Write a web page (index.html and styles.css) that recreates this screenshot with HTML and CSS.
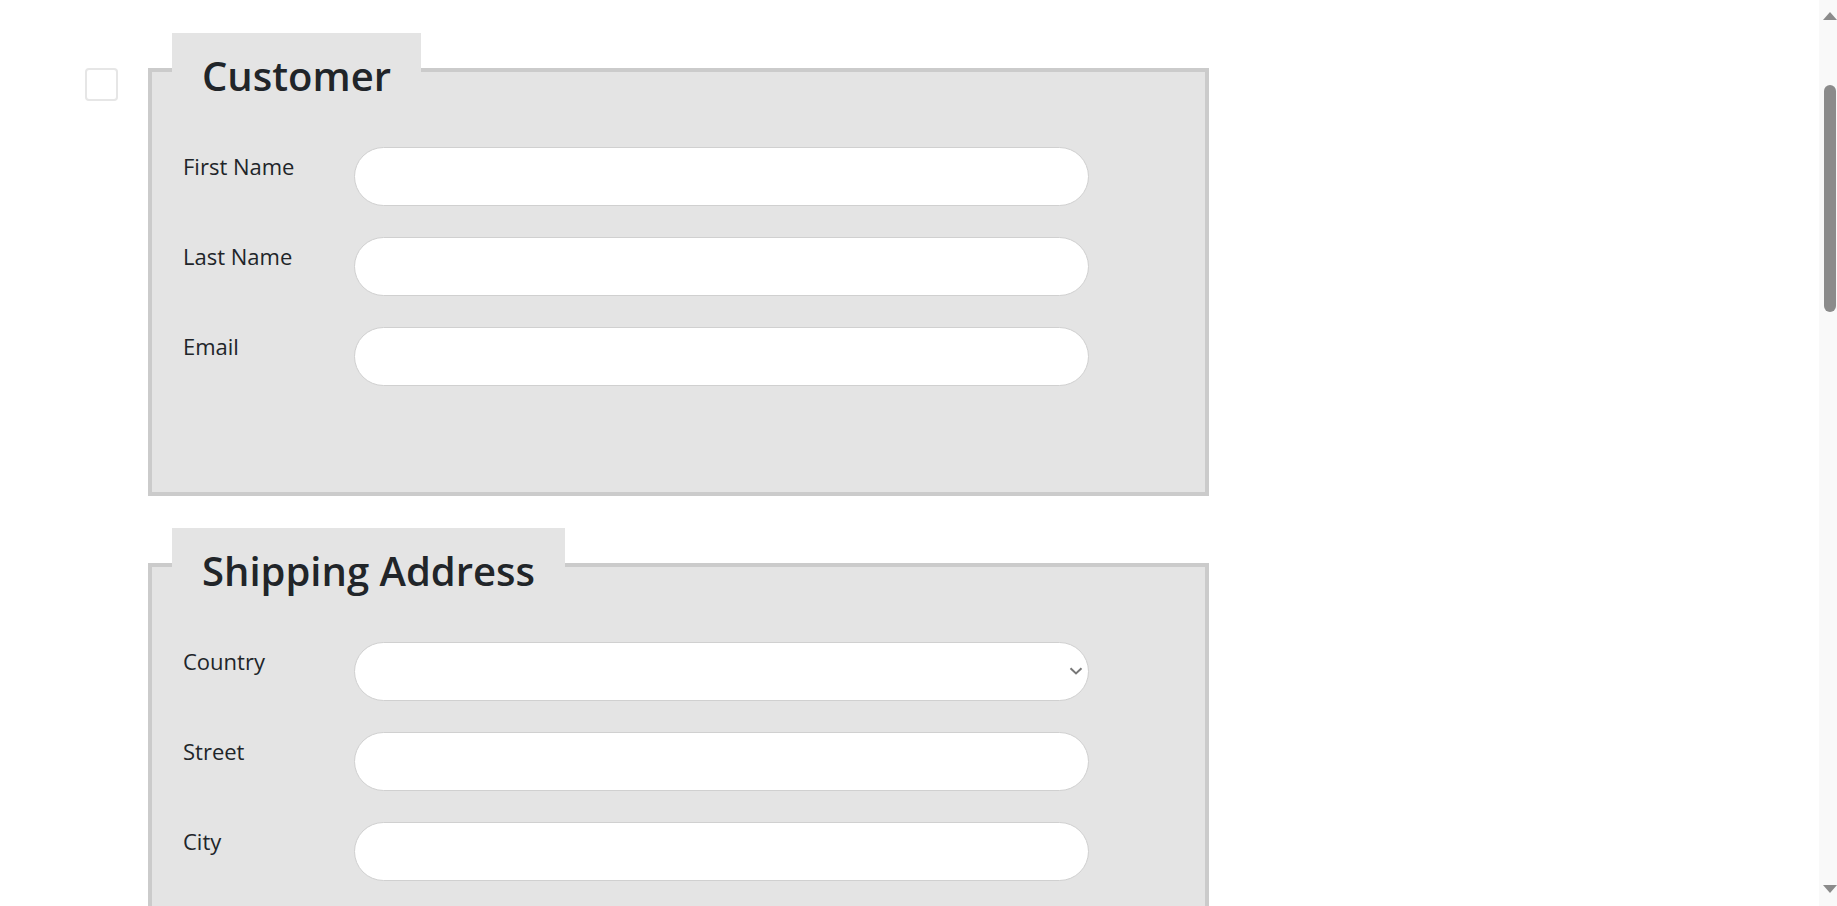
FILE: index.html
```html
<!DOCTYPE html>
<html lang="en">
<head>
<meta charset="utf-8">
<title>Order Form</title>
<link rel="stylesheet" href="styles.css">
</head>
<body>
<form class="order-form">
  <input class="section-toggle" type="checkbox" aria-label="Toggle section">
  <fieldset class="section">
    <legend class="section-title">Customer</legend>
    <div class="field-grid">
      <label class="field-label" for="first-name">First Name</label>
      <input class="field-input" id="first-name" type="text">
      <label class="field-label" for="last-name">Last Name</label>
      <input class="field-input" id="last-name" type="text">
      <label class="field-label" for="email">Email</label>
      <input class="field-input" id="email" type="email">
    </div>
  </fieldset>

  <div class="gutter"></div>
  <fieldset class="section">
    <legend class="section-title">Shipping Address</legend>
    <div class="field-grid">
      <label class="field-label" for="country">Country</label>
      <div class="select-wrap">
        <select class="field-input field-select" id="country">
          <option></option>
        </select>
        <svg class="select-chevron" width="14" height="8" viewBox="0 0 14 8" aria-hidden="true"><path d="M1.5 1.2 L7 6.4 L12.5 1.2" fill="none" stroke="#777" stroke-width="2"/></svg>
      </div>
      <label class="field-label" for="street">Street</label>
      <input class="field-input" id="street" type="text">
      <label class="field-label" for="city">City</label>
      <input class="field-input" id="city" type="text">
      <label class="field-label" for="state">State</label>
      <input class="field-input" id="state" type="text">
      <label class="field-label" for="zip">Postal Code</label>
      <input class="field-input" id="zip" type="text">
    </div>
  </fieldset>
</form>

<div class="scrollbar" aria-hidden="true">
  <svg class="scroll-arrow scroll-arrow-up" width="14" height="8" viewBox="0 0 14 8"><path d="M7 0 L14 8 L0 8 Z" fill="#8b8b8b"/></svg>
  <div class="scroll-track"><div class="scroll-thumb"></div></div>
  <svg class="scroll-arrow scroll-arrow-down" width="14" height="8" viewBox="0 0 14 8"><path d="M0 0 L14 0 L7 8 Z" fill="#8b8b8b"/></svg>
</div>
</body>
</html>
```

FILE: styles.css
```css
html {
  background: #ffffff;
}

body {
  margin: 0;
  font-family: "Open Sans", "Noto Sans", "Liberation Sans", sans-serif;
  color: #212529;
  background: #ffffff;
}

.order-form {
  display: grid;
  grid-template-columns: 33px 1061px;
  column-gap: 30px;
  row-gap: 32px;
  padding: 33px 0 2600px 85px;
  align-items: start;
}

.section-toggle {
  appearance: none;
  -webkit-appearance: none;
  margin: 35px 0 0 0;
  width: 33px;
  height: 33px;
  border: 2px solid #e6e6e6;
  border-radius: 4px;
  background: #ffffff;
  box-sizing: border-box;
}

.gutter {
  width: 33px;
}

.section {
  margin: 0;
  min-width: 0;
  box-sizing: border-box;
  width: 1061px;
  border: 4px solid #cbcbcb;
  background: #e4e4e4;
  padding: 40px 0 106px 31px;
}

.section-title {
  margin-left: -11px;
  padding: 11px 30px 0 30px;
  height: 74px;
  box-sizing: border-box;
  background: #e4e4e4;
  font-size: 40px;
  line-height: 63px;
  font-weight: 600;
  color: #212529;
}

.field-grid {
  display: grid;
  grid-template-columns: 171px 735px;
  row-gap: 31px;
  align-items: start;
}

.field-label {
  padding-top: 3px;
  font-size: 22px;
  line-height: 33px;
  color: #212529;
}

.field-input {
  display: block;
  box-sizing: border-box;
  width: 735px;
  height: 59px;
  margin: 0;
  padding: 0 28px;
  border: 1px solid #d0d0d0;
  border-radius: 30px;
  background: #ffffff;
  font-family: inherit;
  font-size: 22px;
  color: #212529;
  outline: none;
}

.select-wrap {
  position: relative;
  width: 735px;
}

.field-select {
  appearance: none;
  -webkit-appearance: none;
}

.select-chevron {
  position: absolute;
  right: 6px;
  top: 25px;
  pointer-events: none;
}

/* page scrollbar overlay */
.scrollbar {
  position: fixed;
  top: 0;
  right: 0;
  width: 18px;
  height: 100vh;
  background: #f9f9f9;
  display: flex;
  flex-direction: column;
  align-items: flex-start;
}

.scroll-arrow {
  display: block;
  flex: none;
  margin-left: 4px;
}

.scroll-arrow-up {
  margin-top: 12px;
}

.scroll-arrow-down {
  margin-bottom: 13px;
}

.scroll-track {
  flex: 1;
  width: 100%;
}

.scroll-thumb {
  margin: 65px 0 0 5px;
  width: 12px;
  height: 227px;
  border-radius: 6px;
  background: #8b8b8b;
}
```
